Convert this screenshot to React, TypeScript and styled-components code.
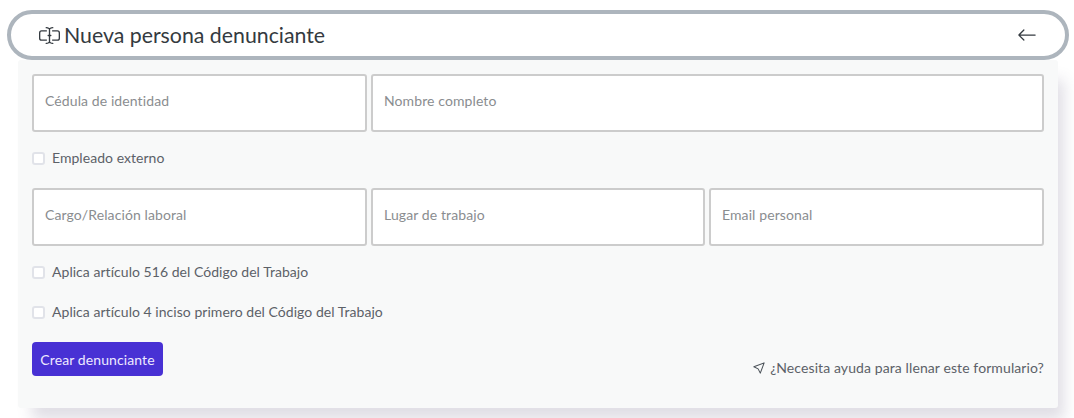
import React from "react";
import styled, { createGlobalStyle } from "styled-components";
import { BsInputCursorText, BsArrowLeft } from "react-icons/bs";

const Global = createGlobalStyle`
  html, body { margin: 0; padding: 0; background: #fff; }
  * { box-sizing: border-box; }
  body { font-family: "Lato", "Open Sans", sans-serif; }
`;

const Page = styled.div`
  width: 1074px;
  height: 418px;
  padding: 10px 5px 0 7px;
  overflow: hidden;
`;

const Header = styled.header`
  position: relative;
  z-index: 1;
  height: 50px;
  border: 4px solid #adb5bd;
  border-radius: 25px;
  background: #fff;
  display: flex;
  align-items: center;
  justify-content: space-between;
  padding: 0 28px 0 28px;
  color: #343a40;
`;

const Title = styled.h1`
  margin: 0;
  display: flex;
  align-items: center;
  gap: 4px;
  font-size: 21.3px;
  line-height: 30px;
  font-weight: 400;
`;

const Card = styled.section`
  margin: 0 11px;
  height: 348px;
  padding: 14px;
  background: #f8f9f9;
  border-radius: 3px;
  box-shadow: 10px 16px 14px -4px rgba(70, 60, 100, 0.17);
  display: flex;
  flex-direction: column;
`;

const Row = styled.div<{ $cols: string; $top?: number }>`
  display: grid;
  grid-template-columns: ${(p) => p.$cols};
  gap: 4px;
  margin-top: ${(p) => p.$top ?? 0}px;
`;

const Field = styled.input`
  height: 58px;
  width: 100%;
  min-width: 0;
  border: 2px solid #cccccc;
  border-radius: 3px;
  background: #fff;
  padding: 0 11px 6px;
  font: 400 14px "Lato", sans-serif;
  letter-spacing: 0.1px;
  outline: none;
  &::placeholder { color: #8a8d90; opacity: 1; }
`;

const Check = styled.label<{ $top: number }>`
  display: flex;
  align-items: center;
  gap: 7px;
  height: 20px;
  font-size: 14px;
  letter-spacing: 0.04px;
  color: #5c6168;
  margin-top: ${(p) => p.$top}px;
`;

const Box = styled.span`
  width: 13px;
  height: 13px;
  margin-top: 2px;
  border: 2px solid #e1e3e9;
  border-radius: 3px;
  background: #fff;
  flex: none;
`;

const Footer = styled.div`
  display: flex;
  justify-content: space-between;
  align-items: flex-end;
  margin-top: 21px;
`;

const Button = styled.button`
  width: 131px;
  height: 34px;
  border: 0;
  border-radius: 4px;
  background: #4831d4;
  color: #eeeaff;
  font: 400 14px "Lato", sans-serif;
  letter-spacing: 0.1px;
  padding: 0;
`;

const Help = styled.a`
  display: flex;
  align-items: center;
  gap: 5px;
  font-size: 14px;
  letter-spacing: 0.1px;
  color: #5c6168;
`;

export default function App() {
  return (
    <Page>
      <Global />
      <Header>
        <Title><BsInputCursorText size={21} />Nueva persona denunciante</Title>
        <BsArrowLeft size={20} />
      </Header>
      <Card>
        <Row $cols="335px 1fr">
          <Field placeholder="Cédula de identidad" />
          <Field placeholder="Nombre completo" />
        </Row>
        <Check $top={15}><Box />Empleado externo</Check>
        <Row $cols="335px 334px 1fr" $top={21}>
          <Field placeholder="Cargo/Relación laboral" />
          <Field placeholder="Lugar de trabajo" />
          <Field placeholder="Email personal" />
        </Row>
        <Check $top={15}><Box />Aplica artículo 516 del Código del Trabajo</Check>
        <Check $top={20}><Box />Aplica artículo 4 inciso primero del Código del Trabajo</Check>
        <Footer>
          <Button>Crear denunciante</Button>
          <Help>
            <svg width="12" height="12" viewBox="0 0 14 14" fill="none" stroke="#495057" strokeWidth="1.2" strokeLinejoin="round">
              <path d="M13 1 1 5.5 6 8l2.5 5z" />
            </svg>
            ¿Necesita ayuda para llenar este formulario?
          </Help>
        </Footer>
      </Card>
    </Page>
  );
}
